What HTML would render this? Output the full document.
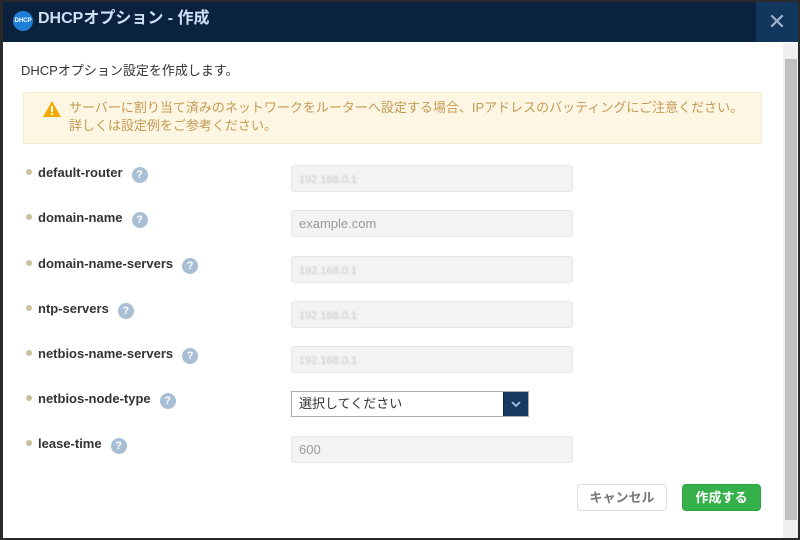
<!DOCTYPE html>
<html><head><meta charset="utf-8"><style>
*{box-sizing:border-box;margin:0;padding:0}
body{width:800px;height:540px;overflow:hidden;background:#2a2a2a;font-family:"Liberation Sans","Noto Sans CJK JP",sans-serif;position:relative}
.win{position:absolute;left:3px;top:2px;width:795px;height:536px;background:#fff}
.hdr{position:absolute;left:0;top:0;width:795px;height:40px;background:#0b223f}
.hdr .t{position:absolute;left:35px;top:8px;color:#cfe0f5;font-size:16px;line-height:18px;font-weight:bold}
.logo{position:absolute;left:10px;top:9px;width:20px;height:20px;border-radius:50%;background:#1e7fd9;color:#fff;font-size:6px;font-weight:bold;text-align:center;line-height:20px}
.x{position:absolute;left:753px;top:0;width:42px;height:40px;background:#12375f;color:#9fb2c7;font-size:22px;text-align:center;line-height:40px;font-weight:300}
.sb{position:absolute;left:780px;top:41px;width:15px;height:495px;background:#f0f0f0}
.sb .th{position:absolute;left:2px;top:16px;width:12px;height:461px;background:#c0c0c0}
.intro{position:absolute;left:18px;top:61px;font-size:13px;line-height:16px;color:#333}
.warn{position:absolute;left:20px;top:90px;width:739px;height:52px;background:#fdf6e3;border:1px solid #f6ecd2;color:#c59a55;font-size:13px;line-height:18px;padding:6px 0 0 45px}
.warn .i{position:absolute;left:19px;top:8px}
.lab{position:absolute;left:23px;font-size:13px;line-height:16px;font-weight:bold;color:#333}
.lab:before{content:"";display:inline-block;width:6px;height:6px;border-radius:50%;background:#c8c29a;margin-right:6px;vertical-align:2px}
.q{display:inline-block;width:16px;height:16px;border-radius:50%;background:#a9bfd6;color:#fff;font-size:11px;text-align:center;line-height:16px;margin-left:9px;vertical-align:-1px}
.inp{position:absolute;left:288px;width:282px;height:27px;background:#f3f3f3;border:1px solid #e6e6e6;border-radius:3px;font-size:13px;line-height:16px;color:#999;padding:5px 7px}
.blur{color:#c8c8c8;font-size:11px;letter-spacing:0px;filter:blur(0.7px)}
.sel{position:absolute;left:288px;top:389px;width:238px;height:26px;border:1px solid #aaa;background:#fff;font-size:13px;line-height:16px;color:#333;padding:4px 7px}
.sel .b{position:absolute;right:0;top:0;width:25px;height:24px;background:#173a63;border-left:1px solid #0d2846}
.btn{position:absolute;top:482px;height:27px;border-radius:4px;font-size:13px;line-height:25px;font-weight:bold;text-align:center}
</style></head><body>
<div class="win">
<div class="hdr"><div class="logo">DHCP</div><div class="t">DHCPオプション - 作成</div><div class="x">✕</div></div>
<div class="sb"><div class="th"></div></div>
<div class="intro">DHCPオプション設定を作成します。</div>
<div class="warn"><svg class="i" width="18" height="16" viewBox="0 0 18 16"><path d="M9 0L18 16H0Z" fill="#f2a900"/><rect x="8" y="5" width="2" height="6" fill="#fff"/><rect x="8" y="12" width="2" height="2" fill="#fff"/></svg>サーバーに割り当て済みのネットワークをルーターへ設定する場合、IPアドレスのバッティングにご注意ください。<br>詳しくは設定例をご参考ください。</div>
<div class="lab" style="top:163px">default-router<span class="q">?</span></div>
<div class="inp" style="top:163px"><span class="blur">192.168.0.1</span></div>
<div class="lab" style="top:208px">domain-name<span class="q">?</span></div>
<div class="inp" style="top:208px">example.com</div>
<div class="lab" style="top:254px">domain-name-servers<span class="q">?</span></div>
<div class="inp" style="top:254px"><span class="blur">192.168.0.1</span></div>
<div class="lab" style="top:299px">ntp-servers<span class="q">?</span></div>
<div class="inp" style="top:299px"><span class="blur">192.168.0.1</span></div>
<div class="lab" style="top:344px">netbios-name-servers<span class="q">?</span></div>
<div class="inp" style="top:344px"><span class="blur">192.168.0.1</span></div>
<div class="lab" style="top:389px">netbios-node-type<span class="q">?</span></div>
<div class="sel">選択してください<div class="b"><svg width="24" height="24" viewBox="0 0 24 24"><path d="M8 10l4 4 4-4" stroke="#9cc2ee" stroke-width="1.8" fill="none"/></svg></div></div>
<div class="lab" style="top:434px">lease-time<span class="q">?</span></div>
<div class="inp" style="top:434px">600</div>
<div class="btn" style="left:574px;width:90px;border:1px solid #ddd;color:#777;background:#fff">キャンセル</div>
<div class="btn" style="left:679px;width:79px;background:#35b04a;color:#fff;border:1px solid #2fa343">作成する</div>
</div>
</body></html>
